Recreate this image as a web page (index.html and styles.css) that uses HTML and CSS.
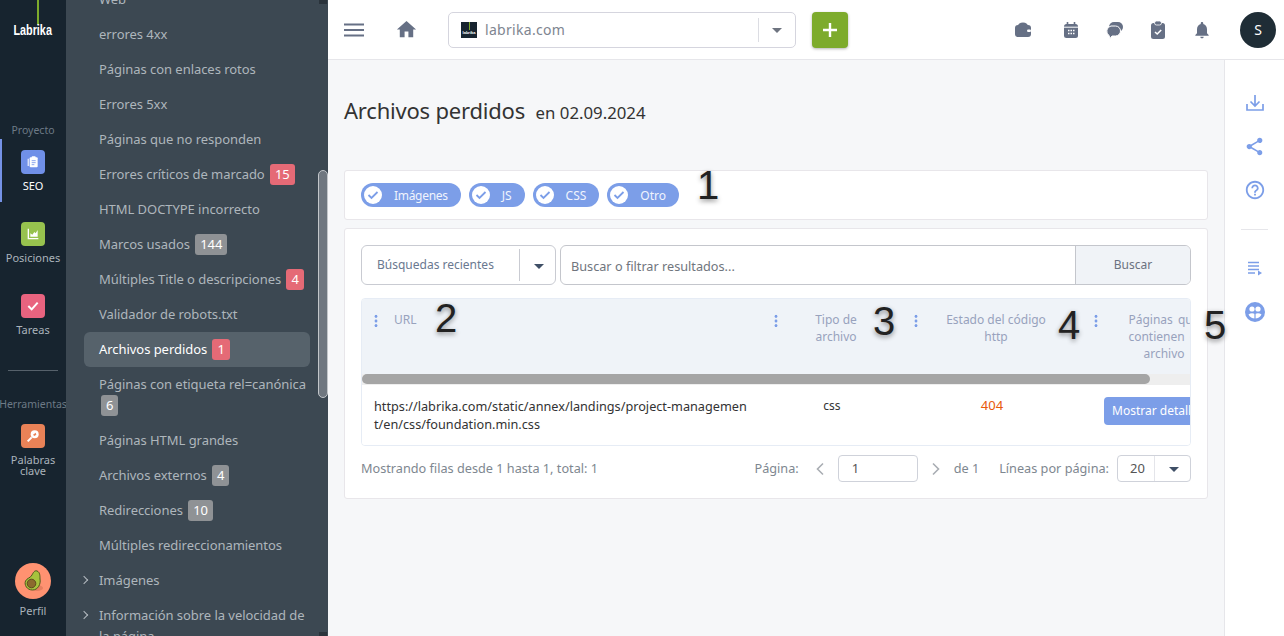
FILE: index.html
```html
<!DOCTYPE html>
<html lang="es">
<head>
<meta charset="utf-8">
<title>Archivos perdidos</title>
<link rel="stylesheet" href="styles.css">
</head>
<body>
<div class="app">
  <nav class="rail">
    <div class="logo"><span class="logo-line"></span><span class="logo-text">Labrika</span></div>
    <div class="rail-title rail-title-first">Proyecto</div>
    <a class="rail-item active">
      <span class="rail-icon ic-seo"><svg viewBox="0 0 24 24" width="16" height="16"><rect x="7" y="5" width="12" height="15" rx="1.5" fill="#fff"/><rect x="10" y="3.5" width="6" height="3" rx="1" fill="#fff"/><path d="M4 7h1.6v11H4z" fill="#fff"/><path d="M10 10h6M10 13h6M10 16h4" stroke="#7090e8" stroke-width="1.2"/></svg></span>
      <span class="rail-label">SEO</span>
    </a>
    <a class="rail-item">
      <span class="rail-icon ic-pos"><svg viewBox="0 0 24 24" width="16" height="16"><path d="M4 4v16h16v-2H6V4z" fill="#fff"/><path d="M8 16v-5l3 2 3-4 2 2 3-5v10z" fill="#fff"/></svg></span>
      <span class="rail-label">Posiciones</span>
    </a>
    <a class="rail-item">
      <span class="rail-icon ic-task"><svg viewBox="0 0 24 24" width="16" height="16"><path d="M5 12l5 5 9-10" fill="none" stroke="#fff" stroke-width="3"/></svg></span>
      <span class="rail-label">Tareas</span>
    </a>
    <div class="rail-sep"></div>
    <div class="rail-title">Herramientas</div>
    <a class="rail-item">
      <span class="rail-icon ic-key"><svg viewBox="0 0 24 24" width="16" height="16"><circle cx="14.5" cy="9.5" r="6" fill="#fff"/><path d="M10 14l-6 6" stroke="#fff" stroke-width="3"/><path d="M12 10l4-3 1 3-3 2z" fill="#e98257"/></svg></span>
      <span class="rail-label">Palabras clave</span>
    </a>
    <a class="rail-profile">
      <span class="avocado"><svg viewBox="0 0 36 36" width="36" height="36"><circle cx="18" cy="18" r="18" fill="#ff9271"/><ellipse cx="22" cy="25" rx="6" ry="3" fill="#e57f60"/><path d="M22 8c3 1 3 5 3 8 1 5-2 11-7.500 11S9 22 10.500 18c1.500-3 5-3 6.500-6 1-2 2.500-5 5-4z" fill="#a6c23d" stroke="#4d5a1c" stroke-width="1"/><circle cx="16.500" cy="20.500" r="4.300" fill="#8c6a2e" stroke="#5e4a1c"/></svg></span>
      <span class="rail-label">Perfil</span>
    </a>
  </nav>

  <aside class="side">
    <ul class="side-list">
      <li class="side-row">Web</li>
      <li class="side-row">errores 4xx</li>
      <li class="side-row">Páginas con enlaces rotos</li>
      <li class="side-row">Errores 5xx</li>
      <li class="side-row">Páginas que no responden</li>
      <li class="side-row">Errores críticos de marcado <span class="badge red">15</span></li>
      <li class="side-row">HTML DOCTYPE incorrecto</li>
      <li class="side-row">Marcos usados <span class="badge grey">144</span></li>
      <li class="side-row">Múltiples Title o descripciones <span class="badge red">4</span></li>
      <li class="side-row">Validador de robots.txt</li>
      <li class="side-row current">Archivos perdidos <span class="badge red">1</span></li>
      <li class="side-row">Páginas con etiqueta rel=canónica <span class="badge grey">6</span></li>
      <li class="side-row">Páginas HTML grandes</li>
      <li class="side-row">Archivos externos <span class="badge grey">4</span></li>
      <li class="side-row">Redirecciones <span class="badge grey">10</span></li>
      <li class="side-row">Múltiples redireccionamientos</li>
      <li class="side-row arrow">Imágenes</li>
      <li class="side-row arrow">Información sobre la velocidad de la página</li>
    </ul>
    <div class="side-scroll"></div>
  </aside>

  <div class="content">
    <header class="top">
      <button class="plain menu"><svg viewBox="0 0 20 14" width="20" height="14"><path d="M0 1.500h20M0 7h20M0 12.500h20" stroke="#667085" stroke-width="2"/></svg></button>
      <button class="plain home"><svg viewBox="0 0 24 24" width="23" height="23"><path d="M10 20v-6h4v6h5v-8h3L12 3 2 12h3v8z" fill="#667085"/></svg></button>
      <div class="site-select">
        <span class="favicon"><i></i><b>labrika</b></span>
        <span class="site-name">labrika.com</span>
        <span class="site-div"></span>
        <span class="caret grey-caret"></span>
      </div>
      <button class="add"><svg viewBox="0 0 14 14" width="14" height="14"><path d="M7 0v14M0 7h14" stroke="#fff" stroke-width="2.400"/></svg></button>
      <div class="top-icons">
        <svg class="ti" viewBox="0 0 18 18" width="18" height="18"><path d="M4 5c0-2 2-3.500 5-3.500s4.500 1.500 5 3.500z" fill="#667085"/><rect x="1" y="4" width="16" height="12" rx="3" fill="#667085"/><rect x="13" y="8.500" width="4" height="2.500" rx="1.200" fill="#fff"/></svg>
        <svg class="ti" viewBox="0 0 18 18" width="18" height="18"><rect x="2" y="3" width="14" height="14" rx="2.500" fill="#667085"/><path d="M5.500 1v4M12.500 1v4" stroke="#667085" stroke-width="1.600"/><path d="M2 6.200h14" stroke="#fff"/><path d="M6 9.500h1.500M8.500 9.500H10M11 9.500h1.500M6 12.500h1.500M8.500 12.500H10M11 12.500h1.500" stroke="#fff" stroke-width="1.500"/></svg>
        <svg class="ti" viewBox="0 0 20 18" width="20" height="18"><rect x="5" y="1" width="14" height="10" rx="5" fill="#667085"/><path d="M7 5h4.500a5 5 0 0 1 0 10H8l-2 2.500-1-3A5.300 5.300 0 0 1 7 5z" fill="#667085" stroke="#fff"/></svg>
        <svg class="ti" viewBox="0 0 18 20" width="18" height="20"><rect x="2" y="3" width="14" height="16" rx="2.500" fill="#667085"/><rect x="5.500" y="1" width="7" height="4" rx="2" fill="#667085" stroke="#fff" stroke-width=".8"/><path d="M6 12l2.200 2 4-4" fill="none" stroke="#fff" stroke-width="1.600"/></svg>
        <svg class="ti" viewBox="0 0 24 24" width="20" height="20"><path d="M12 22c1.100 0 2-.9 2-2h-4c0 1.100.9 2 2 2zm6-6v-5c0-3.070-1.630-5.640-4.500-6.320V4c0-.83-.67-1.500-1.500-1.500s-1.500.67-1.500 1.500v.68C7.640 5.360 6 7.920 6 11v5l-2 2v1h16v-1l-2-2z" fill="#667085"/></svg>
      </div>
      <span class="avatar">S</span>
    </header>

    <div class="body">
      <main class="main">
        <h1 class="title">Archivos perdidos <small>en 02.09.2024</small></h1>

        <section class="card chips">
          <span class="chip"><svg viewBox="0 0 18 18" width="18" height="18"><circle cx="9" cy="9" r="9" fill="#fff"/><path d="M4.500 9l3 3 6-6" fill="none" stroke="#7c9ee8" stroke-width="1.800"/></svg>Imágenes</span>
          <span class="chip"><svg viewBox="0 0 18 18" width="18" height="18"><circle cx="9" cy="9" r="9" fill="#fff"/><path d="M4.500 9l3 3 6-6" fill="none" stroke="#7c9ee8" stroke-width="1.800"/></svg>JS</span>
          <span class="chip"><svg viewBox="0 0 18 18" width="18" height="18"><circle cx="9" cy="9" r="9" fill="#fff"/><path d="M4.500 9l3 3 6-6" fill="none" stroke="#7c9ee8" stroke-width="1.800"/></svg>CSS</span>
          <span class="chip"><svg viewBox="0 0 18 18" width="18" height="18"><circle cx="9" cy="9" r="9" fill="#fff"/><path d="M4.500 9l3 3 6-6" fill="none" stroke="#7c9ee8" stroke-width="1.800"/></svg>Otro</span>
        </section>

        <section class="card results">
          <div class="search">
            <div class="recent"><span class="recent-text">Búsquedas recientes</span><span class="recent-div"></span><span class="caret dark-caret"></span></div>
            <div class="query"><span class="query-text">Buscar o filtrar resultados...</span><span class="query-btn">Buscar</span></div>
          </div>

          <div class="table">
            <div class="thead">
              <div class="th c1"><span class="dots"></span><span class="th-label">URL</span></div>
              <div class="th c2"><span class="dots"></span><span class="th-label">Tipo de<br>archivo</span></div>
              <div class="th c3"><span class="dots"></span><span class="th-label">Estado del código<br>http</span></div>
              <div class="th c4"><span class="dots"></span><span class="th-label">Páginas que<br>contienen el<br>archivo</span></div>
            </div>
            <div class="hscroll"><div class="hthumb"></div></div>
            <div class="tbody">
              <div class="td c1 url">https://labrika.com/static/annex/landings/project-management/en/css/foundation.min.css</div>
              <div class="td c2 type">css</div>
              <div class="td c3 status">404</div>
              <div class="td c4"><span class="details">Mostrar detalles</span></div>
            </div>
          </div>

          <div class="pager">
            <span class="pager-info">Mostrando filas desde 1 hasta 1, total: 1</span>
            <span class="pager-label">Página:</span>
            <svg class="chev" viewBox="0 0 10 14" width="10" height="14"><path d="M8 1.500L2.500 7 8 12.500" fill="none" stroke="#a9adb3" stroke-width="1.600"/></svg>
            <span class="page-input">1</span>
            <svg class="chev" viewBox="0 0 10 14" width="10" height="14"><path d="M2 1.500L7.500 7 2 12.500" fill="none" stroke="#a9adb3" stroke-width="1.600"/></svg>
            <span class="pager-of">de 1</span>
            <span class="pager-lines">Líneas por página:</span>
            <span class="per-page"><span class="per-val">20</span><span class="caret dark-caret"></span></span>
          </div>
        </section>
      </main>

      <aside class="tools">
        <svg viewBox="0 0 20 20" width="20" height="20"><path d="M10 2v11M5.500 8.500L10 13l4.500-4.500M2 11v6h16v-6" fill="none" stroke="#7c9ee8" stroke-width="1.700"/></svg>
        <svg viewBox="0 0 24 24" width="21" height="21"><path d="M18 16.080c-.76 0-1.440.3-1.960.77L8.910 12.700c.05-.23.09-.46.09-.7s-.04-.47-.09-.7l7.050-4.110c.54.5 1.250.81 2.040.81 1.660 0 3-1.340 3-3s-1.340-3-3-3-3 1.340-3 3c0 .24.04.47.09.7L8.040 9.810C7.500 9.310 6.790 9 6 9c-1.660 0-3 1.340-3 3s1.340 3 3 3c.79 0 1.500-.31 2.040-.81l7.120 4.160c-.05.21-.08.43-.08.65 0 1.610 1.310 2.920 2.920 2.920s2.920-1.310 2.920-2.920-1.310-2.920-2.920-2.920z" fill="#7c9ee8"/></svg>
        <svg viewBox="0 0 24 24" width="22" height="22"><path d="M11 18h2v-2h-2v2zm1-16C6.480 2 2 6.480 2 12s4.480 10 10 10 10-4.480 10-10S17.520 2 12 2zm0 18c-4.410 0-8-3.590-8-8s3.590-8 8-8 8 3.590 8 8-3.590 8-8 8zm0-14c-2.210 0-4 1.790-4 4h2c0-1.100.9-2 2-2s2 .9 2 2c0 2-3 1.750-3 5h2c0-2.250 3-2.500 3-5 0-2.210-1.790-4-4-4z" fill="#7c9ee8"/></svg>
        <span class="tools-sep"></span>
        <svg viewBox="0 0 16 16" width="16" height="16"><path d="M1 2.500h11M1 6h11M1 9.500h11M1 13h7" stroke="#7c9ee8" stroke-width="1.500"/><path d="M11 10.500l4 2.500-4 2.500z" fill="#7c9ee8"/></svg>
        <svg viewBox="0 0 20 20" width="20" height="20"><circle cx="10" cy="10" r="10" fill="#7c9ee8"/><circle cx="7" cy="7" r="2.600" fill="#fff"/><circle cx="13" cy="7" r="2.600" fill="#fff"/><path d="M3.500 12.500c2-1.500 4.800-1.500 6.500-.3 1.700-1.200 4.500-1.200 6.500.3a7.200 7.200 0 0 1-13 0z" fill="#fff"/><path d="M10 12v5" stroke="#7c9ee8" stroke-width="1.200"/></svg>
      </aside>
    </div>
  </div>
</div>
<span class="mark m1">1</span>
<span class="mark m2">2</span>
<span class="mark m3">3</span>
<span class="mark m4">4</span>
<span class="mark m5">5</span>
</body>
</html>
```
FILE: styles.css
```css
* { box-sizing: border-box; }
html, body { margin: 0; padding: 0; height: 636px; overflow: hidden; }
body { font-family: "Noto Sans", "Open Sans", sans-serif; font-size: 13px; color: #333; background: #f6f7f9; position: relative; }
svg { display: block; flex: none; }
button { padding: 0; border: 0; background: none; }

.app { display: flex; width: 1284px; height: 636px; }

/* far left rail */
.rail { width: 66px; flex: none; background: #17242f; display: flex; flex-direction: column; align-items: center; height: 636px; position: relative; font-size: 11px; }
.logo { height: 40px; display: flex; flex-direction: column; align-items: center; width: 100%; }
.logo-line { width: 2px; height: 25px; background: #7dab2c; margin-left: 9px; }
.logo-text { font-family: "Liberation Sans", sans-serif; font-size: 15px; line-height: 15px; color: #fff; margin-top: -3px; font-weight: 700; transform: scaleX(.72); }
.rail-title { color: #6d7a86; font-size: 10.500px; line-height: 14px; white-space: nowrap; }
.rail-title-first { margin-top: 83px; margin-bottom: 2px; }
.rail-item { width: 100%; display: flex; flex-direction: column; align-items: center; height: 72px; flex: none; padding-top: 6px; }
.rail-item.active { height: 63px; margin-bottom: 14px; padding-top: 11px; border-left: 2px solid #7592e6; padding-right: 2px; }
.rail-icon { width: 24px; height: 24px; border-radius: 4px; display: flex; align-items: center; justify-content: center; flex: none; }
.ic-seo { background: #7090e8; }
.ic-pos { background: #97c24e; }
.ic-task { background: #e9637f; }
.ic-key { background: #e98257; }
.rail-label { color: #aab3bb; font-size: 11px; line-height: 11px; margin-top: 6px; text-align: center; width: 56px; }
.active .rail-label { color: #fff; }
.rail-sep { width: 50px; height: 1px; background: #56616b; margin-top: 10px; margin-bottom: 26px; flex: none; }
.rail-sep + .rail-title { margin-bottom: 7px; }
.rail-profile { position: absolute; left: 15px; top: 563px; width: 36px; display: flex; flex-direction: column; align-items: center; }
.avocado { display: block; width: 36px; height: 36px; }

/* sidebar */
.side { width: 262px; flex: none; background: #3c4852; height: 636px; overflow: hidden; position: relative; }
.side::before, .side::after { content: ""; position: absolute; left: 253px; width: 8px; height: 4px; background: #2a333b; }
.side::before { top: 0; }
.side::after { bottom: 0; }
.side-list { list-style: none; margin: -18px 18px 0 18px; padding: 0; color: #aeb6bc; font-size: 13px; letter-spacing: -.05px; }
.side-row { padding: 7px 2px 7px 15px; line-height: 21px; border-radius: 6px; }
.side-row.current { background: #56626b; color: #fff; }
.side-row.arrow { position: relative; }
.side-row.arrow::before { content: ""; position: absolute; left: -3px; top: 14px; width: 5px; height: 5px; border-top: 1px solid #b5bcc2; border-right: 1px solid #b5bcc2; transform: rotate(45deg); }
.badge { display: inline-block; height: 21px; line-height: 21px; padding: 0 5px; border-radius: 3px; color: #fff; margin-left: 2px; font-size: 13px; vertical-align: top; }
.badge.red { background: #e56a76; }
.badge.grey { background: #8f9295; }
.side-scroll { position: absolute; left: 252px; top: 170px; width: 10px; height: 228px; background: #6f7780; border: 1px solid #c2c6ca; border-radius: 6px; }

/* top bar */
.content { flex: 1; min-width: 0; display: flex; flex-direction: column; }
.top { height: 60px; flex: none; background: #fff; border-bottom: 1px solid #e6e6ea; display: flex; align-items: center; padding-left: 16px; }
.plain { display: flex; align-items: center; justify-content: center; }
.menu { width: 20px; }
.home { width: 23px; margin-left: 31px; }
.site-select { width: 348px; height: 36px; margin-left: 30px; border: 1px solid #d5d5de; border-radius: 5px; display: flex; align-items: center; padding-left: 12px; }
.favicon { width: 16px; height: 16px; background: #17242f; position: relative; flex: none; overflow: hidden; }
.favicon i { position: absolute; left: 8px; top: 0; width: 1px; height: 8px; background: #7dab2c; }
.favicon b { position: absolute; left: 0; right: 0; top: 8px; font: 700 4px/5px "Liberation Sans", sans-serif; color: #fff; text-align: center; }
.site-name { flex: 1; margin-left: 8px; font-size: 14px; color: #7e8590; letter-spacing: .3px; }
.site-div { width: 1px; height: 24px; background: #dcdde3; }
.caret { width: 0; height: 0; border-left: 5px solid transparent; border-right: 5px solid transparent; flex: none; }
.grey-caret { border-top: 5px solid #6e7480; margin: 1px 13px 0 13px; }
.dark-caret { border-top: 5px solid #3f4f66; margin-top: 2px; }
.add { width: 36px; height: 36px; margin-left: 16px; background: #7dab2c; border-radius: 4px; box-shadow: 0 1px 3px rgba(0,0,0,.3); display: flex; align-items: center; justify-content: center; }
.top-icons { margin-left: auto; display: flex; align-items: center; gap: 25px; margin-right: 28px; }
.ti:first-child { margin-right: 5px; }
.ti:nth-child(2) { margin-right: -1px; }
.avatar { width: 36px; height: 36px; border-radius: 50%; background: #1f2d36; color: #fff; display: flex; align-items: center; justify-content: center; font-size: 14px; margin-right: 8px; flex: none; }

/* body */
.body { flex: 1; display: flex; min-height: 0; }
.main { flex: 1; min-width: 0; padding: 0 16px; }
.title { margin: 35px 0 0; font-size: 22px; font-weight: 400; line-height: 30px; color: #333; letter-spacing: -.2px; height: 75px; }
.title small { font-size: 16.800px; margin-left: 5px; letter-spacing: 0; }
.card { background: #fff; border: 1px solid #e8e6ea; border-radius: 3px; }

.chips { height: 50px; display: flex; align-items: center; gap: 8px; padding-left: 16px; }
.chip { height: 24px; border-radius: 12px; background: #7c9ee8; color: #f0f4fd; font-size: 12px; display: flex; align-items: center; padding: 0 13px 0 3px; }
.chip svg { margin-right: 12px; }
.chip:first-child { letter-spacing: -.3px; }

.results { margin-top: 8px; height: 271px; padding: 16px 16px 0; }
.search { display: flex; gap: 4px; height: 40px; }
.recent { width: 195px; flex: none; border: 1px solid #c9cbd2; border-radius: 6px; display: flex; align-items: center; padding: 0 11px 0 15px; }
.recent-text { flex: 1; color: #6a7890; font-size: 12px; margin-top: -2px; }
.recent-div { width: 1px; height: 32px; background: #c9cbd2; margin-right: 14px; }
.query { flex: 1; border: 1px solid #c4c6cc; border-radius: 6px; display: flex; align-items: stretch; overflow: hidden; }
.query-text { flex: 1; padding-left: 10px; line-height: 41px; color: #70757d; font-size: 12.700px; }
.query-btn { width: 115px; background: #f0f3f7; border-left: 1px solid #c4c6cc; text-align: center; line-height: 37px; color: #6b7280; font-size: 12px; }

.table { margin-top: 13px; height: 148px; border: 1px solid #e6ecf5; border-radius: 4px; overflow: hidden; position: relative; }
.thead, .tbody { display: grid; grid-template-columns: 406px 140px 180px 180px; }
.thead { height: 75px; background: #eff3f8; }
.th { display: flex; padding-top: 12px; color: #98a2bd; font-size: 12px; line-height: 17px; min-width: 0; }
.th.c1 { padding-left: 6px; }
.dots { width: 16px; height: 14px; flex: none; margin-top: 3px; background: radial-gradient(circle, #7c9ee8 1.200px, transparent 1.800px) center top / 4px 4.670px repeat-y; }
.th-label { flex: 1; text-align: center; white-space: nowrap; }
.c1 .th-label { text-align: left; padding-left: 10px; }
.c2 .th-label { padding-right: 20px; }
.c3 .th-label { padding-right: 20px; }
.c4 .th-label { padding-right: 44px; word-spacing: 2px; }
.hscroll { height: 11px; background: #eeeeee; }
.hthumb { width: 788px; height: 10px; background: #a5a5a5; border-radius: 5px; }
.tbody { background: #fff; height: 61px; }
.td { padding-top: 12px; font-size: 12px; line-height: 18px; }
.url { padding-left: 12px; padding-right: 21px; word-break: break-all; color: #333; font-size: 12.700px; }
.type { text-align: center; padding-right: 12px; }
.status { text-align: center; color: #e8590c; padding-top: 11px; padding-right: 12px; font-size: 13px; }
.details { display: block; width: 120px; height: 28px; margin-left: 16px; background: #7c9ee8; color: #fff; border-radius: 4px; line-height: 28px; padding-left: 8px; white-space: nowrap; }
.td.c4 { overflow: hidden; }

.pager { display: flex; align-items: center; height: 27px; margin-top: 9px; color: #7e8790; font-size: 12.700px; }
.pager-info { flex: 1; padding-bottom: 2px; }
.pager-label, .pager-of, .pager-lines { padding-bottom: 2px; }
.chev { margin: 0 13px 0 16px; }
.page-input { width: 80px; height: 27px; border: 1px solid #cfd2da; border-radius: 4px; padding-left: 13px; line-height: 25px; color: #555; font-size: 13px; }
.page-input + .chev { margin: 0 13px; }
.pager-lines { margin-left: 20px; }
.per-page { width: 74px; height: 27px; margin-left: 8px; border: 1px solid #cfd2da; border-radius: 4px; display: flex; align-items: center; padding-left: 12px; color: #555; font-size: 13px; }
.per-val { width: 25px; height: 100%; line-height: 25px; border-right: 1px solid #e4e5ea; margin-right: 14px; flex: none; }

/* right rail */
.tools { width: 60px; flex: none; background: #fff; border-left: 1px solid #e6e6ea; display: flex; flex-direction: column; align-items: center; padding-top: 33px; }
.tools svg:nth-child(2) { margin-top: 23px; }
.tools svg:nth-child(3) { margin-top: 22px; }
.tools-sep { width: 27px; height: 1px; background: #e6e6ea; margin-top: 28px; margin-bottom: 30px; }
.tools svg:nth-child(6) { margin-top: 26px; }

/* numbers laid over the picture */
.mark { position: absolute; font-family: "Liberation Sans", Arial, sans-serif; font-size: 40px; line-height: 40px; color: #222; text-shadow: 0 2px 5px rgba(0,0,0,.45); }
.m1 { left: 697px; top: 165px; }
.m2 { left: 435px; top: 298px; }
.m3 { left: 873px; top: 301px; }
.m4 { left: 1058px; top: 305px; }
.m5 { left: 1204px; top: 305px; }
```
